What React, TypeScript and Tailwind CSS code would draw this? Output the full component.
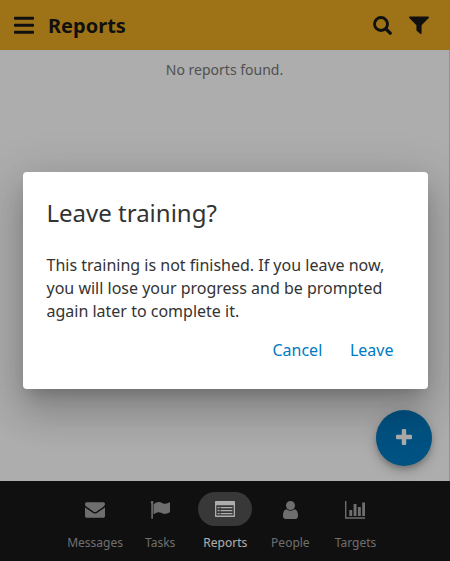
import type { ReactNode } from "react";

function BarsIcon() {
  return (
    <svg width="20" height="18" viewBox="0 0 20 18" fill="currentColor">
      <rect y="0.8" width="20" height="3" rx="0.7" />
      <rect y="7.8" width="20" height="3" rx="0.7" />
      <rect y="14.8" width="20" height="3" rx="0.7" />
    </svg>
  );
}

function SearchIcon() {
  return (
    <svg width="19" height="19" viewBox="0 0 19 19" fill="none" stroke="currentColor" strokeLinecap="round">
      <circle cx="8" cy="8" r="6.500" strokeWidth="2.900" />
      <path d="M13 13l4.200 4.200" strokeWidth="3.300" />
    </svg>
  );
}

function FilterIcon() {
  return (
    <svg width="20" height="18" viewBox="0 0 20 18" fill="currentColor">
      <path d="M.8.600h18.400q.7 0 .8.600.1.500-.3.900L12.600 9.200v8q0 .6-.5.700-.6.100-1-.2L7.700 14.800q-.3-.3-.3-.7V9.200L.3 2.100Q-.1 1.700.1 1.200.2.600.8.600z" />
    </svg>
  );
}

function EnvelopeIcon() {
  return (
    <svg width="20" height="16" viewBox="0 0 1792 1408" fill="currentColor">
      <path d="M1792 454v794q0 66-47 113t-113 47H160q-66 0-113-47T0 1248V454q44 49 101 87 362 246 497 345 57 42 92.500 65.500t94.500 48 110 24.500h2q51 0 110-24.500t94.500-48T1194 886q170-123 498-345 57-39 100-87zm0-294q0 79-49 151t-122 123q-376 261-468 325-10 7-42.500 30.500t-54 38-52 32.500-57.500 27-50 9h-2q-23 0-50-9t-57.500-27-52-32.500-54-38T639 759q-91-64-262-182.500T172 434q-62-42-117-115.500T0 182q0-78 41.500-130T160 0h1472q65 0 112.500 47t47.500 113z" />
    </svg>
  );
}

function FlagIcon() {
  return (
    <svg width="20" height="18" viewBox="-0.6 0 20 18" fill="currentColor">
      <path d="M1.500 0a1.400 1.400 0 0 1 .8 2.500V17.300q0 .5-.5.500h-.6q-.5 0-.5-.5V2.500A1.400 1.400 0 0 1 1.500 0z" />
      <path d="M3.200 3Q6 1.100 8.200 1.100q1.600 0 4.300 1.300 2.500 1 6-1 .9-.4.900.4v9q0 .5-.5.800-4.400 2.300-6.800 1-2.800-1.300-4.300-1.300-1.800 0-4.200 1.600-.7.400-.7-.3V3.600q0-.4.300-.6z" />
    </svg>
  );
}

function ListIcon() {
  return (
    <svg width="20" height="16" viewBox="0 0 20 16" fill="currentColor">
      <path fillRule="evenodd" d="M.8 0h18.400q.8 0 .8.800v14.400q0 .8-.8.800H.8q-.8 0-.8-.8V.8Q0 0 .8 0zM1.300 4.200v10.400h17.400V4.200z" />
      <path d="M2.600 6h2v1.300h-2zM5.600 6h11.800v1.300H5.600zM2.600 9h2v1.300h-2zM5.600 9h11.800v1.300H5.600zM2.600 12h2v1.300h-2zM5.600 12h11.800v1.300H5.600z" />
    </svg>
  );
}

function PersonIcon() {
  return (
    <svg width="15" height="18" viewBox="0 0 1280 1536" fill="currentColor">
      <path d="M1280 1271q0 109-62.500 187t-150.500 78H213q-88 0-150.500-78T0 1271q0-85 8.500-160.500t31.500-152 58.500-131 94-89T327 704q131 128 313 128t313-128q76 0 134.500 34.500t94 89 58.500 131 31.500 152 8.500 160.500zm-256-887q0 159-112.500 271.500T640 768 368.500 655.500 256 384t112.500-271.500T640 0t271.500 112.500T1024 384z" />
    </svg>
  );
}

function ChartIcon() {
  return (
    <svg width="20" height="18" viewBox="0 0 20 18" fill="currentColor">
      <path d="M0 0h1.400v16.300H20v1.500H0zM4.300 9h2.900v5.900H4.300zM8.600 3h2.900v11.900H8.600zM12.900 6h2.900v8.900h-2.900zM17.200 1.500H20v13.400h-2.800z" />
    </svg>
  );
}

function Tab({ label, icon, active = false }: { label: string; icon: ReactNode; active?: boolean }) {
  return (
    <div className={`flex w-[65.100px] flex-col items-center ${active ? "text-white" : "text-[#a3a3a3]"}`}>
      <div className={`flex h-[34px] w-[54px] items-center justify-center rounded-full ${active ? "bg-[#535353]" : "pt-0.5"}`}>
        {icon}
      </div>
      <span className="mt-2 text-[12px] leading-[18px]">{label}</span>
    </div>
  );
}

export default function App() {
  return (
    <div className="relative flex h-[561px] w-[450px] flex-col overflow-hidden bg-white font-['Noto_Sans',sans-serif] text-[#191919]">
      <header className="flex h-[50px] shrink-0 items-center bg-[#e9aa22] pr-[21px] pl-[14px]">
        <BarsIcon />
        <h1 className="ml-[14px] flex-1 pt-0.5 text-[20px] leading-[30px] font-bold">Reports</h1>
        <SearchIcon />
        <div className="ml-[17px]">
          <FilterIcon />
        </div>
      </header>
      <main className="flex flex-1 flex-col items-center justify-between border-r border-[#d8d8d8]">
        <p className="mt-[10px] text-[14px] leading-5 text-[#777]">No reports found.</p>
        <button className="mr-[17px] mb-[15px] flex size-14 items-center justify-center self-end rounded-full bg-[#007ac0] text-white shadow-[0_3px_5px_-1px_rgba(0,0,0,0.2),0_6px_10px_0_rgba(0,0,0,0.14),0_1px_18px_0_rgba(0,0,0,0.12)]">
          <svg width="16" height="16" viewBox="0 0 16 16" fill="currentColor" className="-mt-0.5">
            <path d="M6.800 0h2.400q1 0 1 1v4.800H15q1 0 1 1v2.400q0 1-1 1h-4.800V15q0 1-1 1H6.800q-1 0-1-1v-4.800H1q-1 0-1-1V6.800q0-1 1-1h4.800V1q0-1 1-1z" />
          </svg>
        </button>
      </main>
      <nav className="flex h-20 shrink-0 justify-center bg-[#191919] pt-[11px] pl-[0.6px]">
        <Tab label="Messages" icon={<EnvelopeIcon />} />
        <Tab label="Tasks" icon={<FlagIcon />} />
        <Tab label="Reports" icon={<ListIcon />} active />
        <Tab label="People" icon={<PersonIcon />} />
        <Tab label="Targets" icon={<ChartIcon />} />
      </nav>
      <div className="absolute inset-0 flex items-center justify-center bg-black/32">
        <div className="h-[217px] w-[405px] rounded bg-white px-6 pt-6 text-[#333] shadow-[0_11px_15px_-7px_rgba(0,0,0,0.2),0_24px_38px_3px_rgba(0,0,0,0.14),0_9px_46px_8px_rgba(0,0,0,0.12)]">
          <h2 className="text-[24px] leading-[34px]">Leave training?</h2>
          <p className="mt-6 text-[16px] leading-[23px]">
            This training is not finished. If you leave now, you will lose your progress and be prompted again later to complete it.
          </p>
          <div className="mt-[15px] flex justify-end gap-[27.700px] pr-[10px] text-[16px] leading-6 text-[#007ac0]">
            <button>Cancel</button>
            <button>Leave</button>
          </div>
        </div>
      </div>
    </div>
  );
}
